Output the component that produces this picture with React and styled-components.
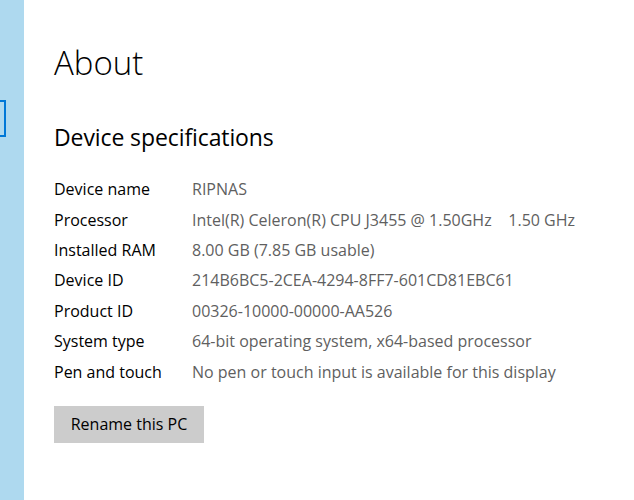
import React from 'react';
import styled, { createGlobalStyle } from 'styled-components';

const GlobalStyle = createGlobalStyle`
  html, body {
    margin: 0;
    padding: 0;
    background: #ffffff;
  }
  body {
    font-family: "Open Sans", "Noto Sans", sans-serif;
  }
`;

const specs = [
  { label: 'Device name', value: 'RIPNAS' },
  { label: 'Processor', value: 'Intel(R) Celeron(R) CPU J3455 @ 1.50GHz    1.50 GHz' },
  { label: 'Installed RAM', value: '8.00 GB (7.85 GB usable)' },
  { label: 'Device ID', value: '214B6BC5-2CEA-4294-8FF7-601CD81EBC61' },
  { label: 'Product ID', value: '00326-10000-00000-AA526' },
  { label: 'System type', value: '64-bit operating system, x64-based processor' },
  { label: 'Pen and touch', value: 'No pen or touch input is available for this display' },
];

function App() {
  return (
    <>
      <GlobalStyle />
      <Window>
        <Sidebar>
          <NavFocus />
        </Sidebar>
        <Content>
          <Title>About</Title>
          <SectionTitle>Device specifications</SectionTitle>
          <SpecList>
            {specs.map((spec) => (
              <SpecRow key={spec.label}>
                <SpecLabel>{spec.label}</SpecLabel>
                <SpecValue>{spec.value}</SpecValue>
              </SpecRow>
            ))}
          </SpecList>
          <RenameButton>Rename this PC</RenameButton>
        </Content>
      </Window>
    </>
  );
}

const Window = styled.div`
  display: flex;
  width: 634px;
  height: 500px;
  overflow: hidden;
`;

const Sidebar = styled.div`
  width: 24px;
  flex-shrink: 0;
  background: #aed9ef;
  padding-top: 100px;
  overflow: hidden;
`;

const NavFocus = styled.div`
  margin-left: -40px;
  width: 42px;
  height: 33px;
  border: 2px solid #0078d7;
`;

const Content = styled.div`
  flex: 1;
  padding: 40px 0 0 30px;
  color: #000;
`;

const Title = styled.h1`
  margin: 0;
  font-size: 33px;
  font-weight: 300;
  line-height: 46px;
`;

const SectionTitle = styled.h2`
  margin: 36px 0 0;
  font-size: 23px;
  font-weight: 400;
  line-height: 30px;
  letter-spacing: -0.1px;
`;

const SpecList = styled.div`
  margin-top: 22px;
  display: flex;
  flex-direction: column;
`;

const SpecRow = styled.div`
  display: grid;
  grid-template-columns: 138px 1fr;
  height: 30.4px;
  align-items: center;
  font-size: 16px;
  white-space: pre;
`;

const SpecLabel = styled.span`
  color: #000;
`;

const SpecValue = styled.span`
  color: #5f5f5f;
`;

const RenameButton = styled.button`
  margin-top: 19px;
  width: 150px;
  height: 37px;
  border: none;
  background: #cccccc;
  font-family: "Open Sans", "Noto Sans", sans-serif;
  font-size: 16px;
  color: #000;
  padding: 0;
`;

export default App;
